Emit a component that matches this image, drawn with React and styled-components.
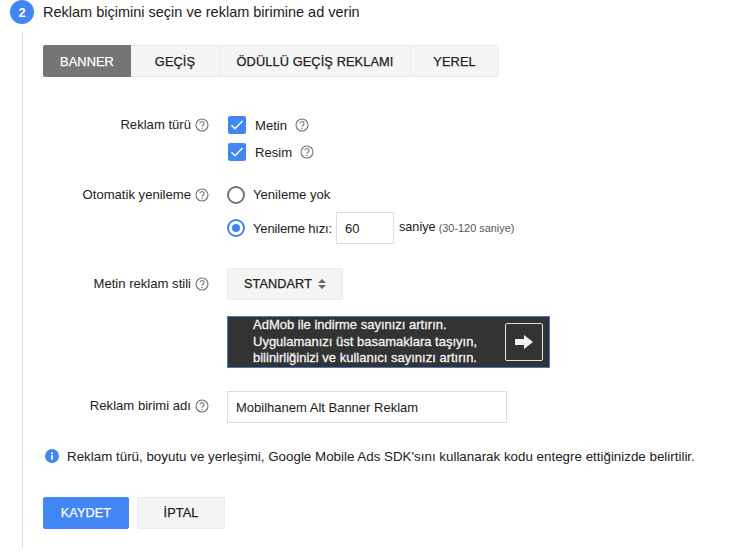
import React from "react";
import styled, { createGlobalStyle } from "styled-components";

const Global = createGlobalStyle`
  html, body { margin: 0; padding: 0; background: #fff; }
  body { font-family: "Liberation Sans", Arial, sans-serif; color: #212121; overflow: hidden; }
  * { box-sizing: border-box; }
`;
const Page = styled.div`width: 743px; height: 552px; overflow: hidden; padding-left: 10px;`;
const StepHeader = styled.div`display: flex; align-items: center; gap: 9px; height: 24px;`;
const StepBadge = styled.div`
  width: 24px; height: 24px; border-radius: 50%; background: #4285f4; color: #fff;
  font-size: 13px; font-weight: 700; display: flex; align-items: center; justify-content: center;
`;
const StepTitle = styled.div`font-size: 14.5px; line-height: 24px; color: #212121;`;
const StepBody = styled.div`
  margin: 8px 0 0 12px; height: 516px; border-left: 1px solid #dcdcdc; padding: 13px 0 0 20px;
`;
const Tabs = styled.div`
  display: inline-flex; height: 32px; border: 1px solid #ebebeb; border-left: 0; border-radius: 2px; background: #f5f5f5;
`;
const Tab = styled.div`
  width: ${p => p.$w}px; margin: -1px 0; display: flex; align-items: center; justify-content: center;
  font-size: 12.8px; letter-spacing: 0.1px; -webkit-text-stroke: 0.25px currentColor;
  color: ${p => (p.$active ? "#fff" : "#212121")};
  background: ${p => (p.$active ? "#757575" : "transparent")};
  border-radius: ${p => (p.$active ? "2px 0 0 2px" : "0")};
  border-right: ${p => (p.$last || p.$active ? "0" : "1px solid #ebebeb")};
`;
const Row = styled.div`
  display: grid; grid-template-columns: 166px 1fr; column-gap: 18px; margin-top: ${p => p.$mt}px;
`;
const Label = styled.div`
  display: flex; justify-content: flex-end; align-items: center; gap: 4px; font-size: 13.1px; height: 18px; color: #212121;
  margin-top: ${p => p.$mt || 0}px;
`;
const LabelText = styled.span`margin-top: -2px;`;
const Stack = styled.div`display: flex; flex-direction: column; gap: ${p => p.$gap}px;`;
const Option = styled.div`display: flex; align-items: center; font-size: 13.1px; height: ${p => p.$h || 18}px;`;
const RadioText = styled.span`margin-top: ${p => p.$mt || 0}px; letter-spacing: ${p => p.$ls || 0}px;`;
const CheckBox = styled.span`
  width: 18px; height: 18px; border-radius: 2px; background: #4285f4; margin: 0 9px 0 1px;
  display: inline-flex; align-items: center; justify-content: center;
`;
const HelpWrap = styled.span`display: inline-flex; margin-left: ${p => p.$ml || 0}px;`;
const Radio = styled.span`
  width: 18px; height: 18px; border-radius: 50%; margin-right: 8px; flex: none;
  border: 2px solid ${p => (p.$on ? "#4285f4" : "#757575")};
  display: inline-flex; align-items: center; justify-content: center;
  &::after { content: ""; width: 8px; height: 8px; border-radius: 50%; background: ${p => (p.$on ? "#4285f4" : "transparent")}; }
`;
const NumInput = styled.div`
  width: 58px; height: 32px; border: 1px solid #dcdcdc; display: flex; align-items: center; padding-left: 8px;
  font-size: 13px; margin: 0 5px 0 4px;
`;
const Seconds = styled.span`font-size: 12.7px; margin-top: -2px;`;
const Hint = styled.span`font-size: 10.9px; color: #555; margin-left: 3px;`;
const SelectBtn = styled.div`
  width: 116px; height: 32px; background: #f5f5f5; border: 1px solid #ebebeb; border-radius: 2px;
  display: flex; align-items: center; justify-content: center; gap: 6px; font-size: 12.7px; letter-spacing: 0.1px; -webkit-text-stroke: 0.25px currentColor;
`;
const AdPreview = styled.div`
  width: 323px; height: 52px; background: #333; border: 1px solid #4a76c4;
  margin-top: 16px; display: flex; align-items: center; justify-content: space-between; padding: 0 6px 0 25px;
`;
const AdText = styled.div`
  color: #f2f2f2; font-size: 13px; line-height: 16.5px; -webkit-text-stroke: 0.3px currentColor;
`;
const AdArrow = styled.div`
  width: 38px; height: 38px; border: 1px solid #e0e0e0; border-radius: 2px; display: flex; align-items: center; justify-content: center;
`;
const NameInput = styled.div`
  width: 280px; height: 32px; border: 1px solid #dcdcdc; display: flex; align-items: center; padding-left: 8px; font-size: 13px;
`;
const Info = styled.div`display: flex; align-items: center; gap: 8px; font-size: 13.37px; margin: 25px 0 0 2px; height: 16px; white-space: nowrap;`;
const Actions = styled.div`display: flex; gap: 8px; margin-top: 33px;`;
const Btn = styled.div`
  height: 32px; width: ${p => p.$w}px; border-radius: 2px; display: flex; align-items: center; justify-content: center;
  font-size: 12.7px; letter-spacing: 0.1px; -webkit-text-stroke: 0.25px currentColor;
  background: ${p => (p.$primary ? "#4285f4" : "#f5f5f5")}; color: ${p => (p.$primary ? "#fff" : "#212121")};
  border: 1px solid ${p => (p.$primary ? "#4285f4" : "#ebebeb")};
`;

const Help = ({ ml }) => (
  <HelpWrap $ml={ml}>
    <svg width="14" height="14" viewBox="0 0 14 14" fill="none">
      <circle cx="7" cy="7" r="6" stroke="#757575" strokeWidth="1.1" />
      <path d="M5 5.6a2 2 0 1 1 3.1 1.6c-.7.45-1.1.8-1.1 1.6" stroke="#757575" strokeWidth="1.1" />
      <circle cx="7" cy="10.4" r=".75" fill="#757575" />
    </svg>
  </HelpWrap>
);
const Check = () => (
  <CheckBox>
    <svg width="14" height="12" viewBox="0 0 14 12" fill="none">
      <path d="M1.5 6.2 5 9.7 12.5 2" stroke="#fff" strokeWidth="1.6" />
    </svg>
  </CheckBox>
);

export default function App() {
  return (
    <Page>
      <Global />
      <StepHeader>
        <StepBadge>2</StepBadge>
        <StepTitle>Reklam biçimini seçin ve reklam birimine ad verin</StepTitle>
      </StepHeader>
      <StepBody>
        <Tabs>
          <Tab $w={88} $active>BANNER</Tab>
          <Tab $w={89}>GEÇİŞ</Tab>
          <Tab $w={191}>ÖDÜLLÜ GEÇİŞ REKLAMI</Tab>
          <Tab $w={87} $last>YEREL</Tab>
        </Tabs>
        <Row $mt={39}>
          <Label><LabelText>Reklam türü</LabelText> <Help /></Label>
          <Stack $gap={9}>
            <Option><Check />Metin<Help ml={8} /></Option>
            <Option><Check />Resim<Help ml={8} /></Option>
          </Stack>
        </Row>
        <Row $mt={21}>
          <Label $mt={4}><LabelText>Otomatik yenileme</LabelText> <Help /></Label>
          <Stack $gap={4}>
            <Option $h={26}><Radio /><RadioText $mt={-2}>Yenileme yok</RadioText></Option>
            <Option $h={32}>
              <Radio $on /><RadioText $ls={-0.2}>Yenileme hızı:</RadioText><NumInput>60</NumInput><Seconds>saniye</Seconds><Hint>(30-120 saniye)</Hint>
            </Option>
          </Stack>
        </Row>
        <Row $mt={24}>
          <Label $mt={7}><LabelText>Metin reklam stili</LabelText> <Help /></Label>
          <div>
            <SelectBtn>
              STANDART
              <svg width="8" height="10" viewBox="0 0 8 10"><path d="M4 0 8 4H0zM4 10 0 6h8z" fill="#666" /></svg>
            </SelectBtn>
            <AdPreview>
              <AdText>
                AdMob ile indirme sayınızı artırın.<br />
                Uygulamanızı üst basamaklara taşıyın,<br />
                bilinirliğinizi ve kullanıcı sayınızı artırın.
              </AdText>
              <AdArrow>
                <svg width="18" height="14" viewBox="0 0 18 14"><path d="M0 4h9V0l9 7-9 7v-4H0z" fill="#f2f2f2" /></svg>
              </AdArrow>
            </AdPreview>
          </div>
        </Row>
        <Row $mt={23}>
          <Label $mt={6}><LabelText>Reklam birimi adı</LabelText> <Help /></Label>
          <NameInput>Mobilhanem Alt Banner Reklam</NameInput>
        </Row>
        <Info>
          <svg width="14" height="14" viewBox="0 0 14 14">
            <circle cx="7" cy="7" r="7" fill="#4285f4" />
            <rect x="6.1" y="6" width="1.8" height="4.6" fill="#fff" />
            <rect x="6.1" y="3.4" width="1.8" height="1.7" fill="#fff" />
          </svg>
          Reklam türü, boyutu ve yerleşimi, Google Mobile Ads SDK'sını kullanarak kodu entegre ettiğinizde belirtilir.
        </Info>
        <Actions>
          <Btn $primary $w={86}>KAYDET</Btn>
          <Btn $w={88}>İPTAL</Btn>
        </Actions>
      </StepBody>
    </Page>
  );
}
